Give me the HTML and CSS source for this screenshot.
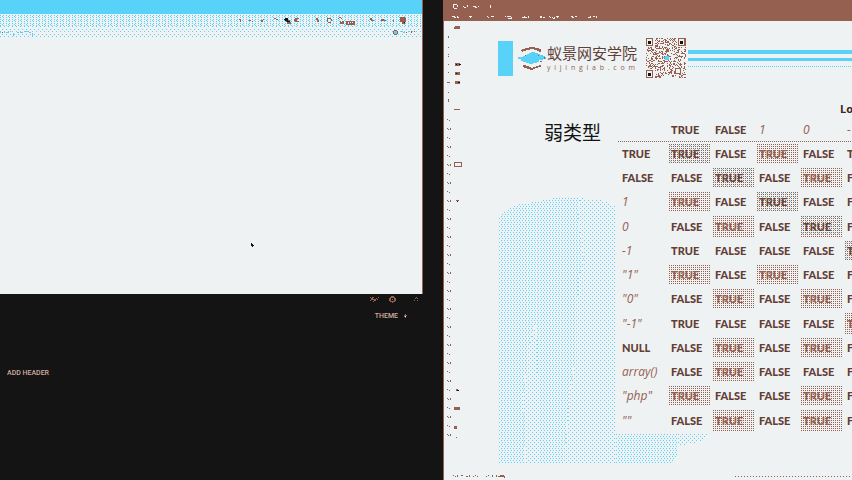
FILE: index.html
```html
<!DOCTYPE html>
<html lang="zh-CN">
<head>
<meta charset="utf-8">
<title>弱类型</title>
<link rel="stylesheet" href="styles.css">
</head>
<body>
<div class="desktop">
  <section class="tool">
    <div class="browser">
      <div class="tabs"></div>
      <div class="toolbar">
        <svg class="addons" width="184" height="12" viewBox="239 14 184 12" aria-hidden="true">
          <path class="brown" d="M240 19h2v1h-2zM241 20h1v2h-1zM250 20h2v1h-2zM253 21h1v1h-1zM262 20h2v2h-2zM264 19h1v1h-1zM275 18h2v1h-2zM277 19h2v1h-2zM288 20h3v2h1v2h-4v-2h-1zM296 18h4v1h-2v2h2v1h-4v-1h-1v-2h1zM317 18h2v2h1v2h-2v-2h-1zM328 18h4v1h-4zM328 19h1v3h-1zM332 19h1v2h-1zM329 22h3v1h-3zM339 18h1v-1h2v1h1v1h-1v-1h-2v1h-1zM341 21h1v1h1v-1h2v3h-4zM347 21h9v4h-9zM371 18h2v2h2v1h-3v-1h-1zM382 19h3v2h-3zM385 20h2v1h-2zM394 20h1v2h-1zM401 17h5v1h1v4h-1v2h-3v-2h-2z"/>
          <path class="ink" d="M285 19h1v-1h3v3h2v1h-3v-1h-2v-1h-1zM405 22h1v1h-1z"/>
          <path class="pale" d="M349 22h1v2h-1zM351 22h1v1h-1zM353 22h1v1h-1z"/>
        </svg>
      </div>
      <div class="bookmarks">
        <svg width="34" height="12" viewBox="0 25 34 12" aria-hidden="true"><path class="blue" d="M0 31h1v1h-1zM4 30h1v2h-1zM6 31h3v1h-3zM10 30h1v1h-1zM13 32h1v3h-1zM17 31h2v1h-2zM20 31h3v1h-3zM25 30h3v1h-3zM29 31h2v1h-2zM32 32h1v3h-1z"/><path class="brown" d="M2 31h1v1h-1z"/></svg>
        <svg width="32" height="12" viewBox="391 25 32 12" aria-hidden="true"><path class="brown" d="M395 29h3v1h-3zM394 30h1v3h-1zM398 30h1v3h-1zM395 33h3v1h-3zM407 31h1v1h-1zM412 30h1v2h-1zM415 30h1v1h-1z"/><path class="blue" d="M395 30h3v3h-3zM402 30h2v1h-2zM404 31h2v1h-2zM409 30h2v1h-2z"/></svg>
      </div>
      <svg class="cursor" width="4" height="5" viewBox="0 0 4 5" aria-hidden="true"><path class="ink" d="M0 0h1v1h1v1h1v1h-1v1h-1v-1h-1z"/></svg>
    </div>
    <div class="panel">
      <div class="panel-icons">
        <svg width="10" height="7" viewBox="0 0 10 7" aria-hidden="true"><path class="brown" d="M0 1h1v1H0zM2 1h2v1H2zM1 2h2v2H1zM0 4h1v1H0zM3 3h3v1H3zM4 4h2v1H4zM6 2h1v1H6zM8 1h1v1H8zM7 3h1v1H7zM3 5h1v1H3z"/></svg>
        <svg width="7" height="7" viewBox="0 0 7 7" aria-hidden="true"><path class="brown" fill-rule="evenodd" d="M2 0h3v1h1v1h1v3H6v1H4v1H3V6H1V5H0V2h1V1h1zM2 2v3h3V2z"/><path class="brown" d="M3 3h1v1H3z"/></svg>
        <svg width="5" height="7" viewBox="0 0 5 7" aria-hidden="true"><path class="brown" d="M2 1h1v1H2zM1 2h1v1H1zM3 2h1v1H3zM0 4h1v1H0zM3 4h1v1H3z"/></svg>
      </div>
      <div class="theme-row">
        <button type="button" class="flat">THEME</button>
        <svg width="4" height="5" viewBox="0 0 4 5" aria-hidden="true"><path class="brown" d="M2 0h1v1H2zM1 1h3v1H1zM1 2h1v1H1zM2 3h1v1H2z"/><path class="pale" d="M2 2h1v1H2z"/></svg>
      </div>
      <button type="button" class="flat add">ADD HEADER</button>
    </div>
  </section>

  <section class="viewer">
    <div class="titlebar">
      <svg width="190" height="21" viewBox="444 0 190 21" aria-hidden="true">
        <path class="pale" d="M453 4h4v1h-4zM453 5h1v3h-1zM457 5h1v2h-1zM454 8h3v1h-3zM463 6h1v1h-1zM464 7h2v1h-2zM467 5h1v2h-1zM473 6h3v1h-3zM475 7h2v1h-2zM478 6h1v1h-1zM490 5h1v3h-1zM452 16h3v1h-3zM454 17h2v1h-2zM457 16h1v2h-1zM458 17h1v1h-1zM469 16h3v1h-3zM470 17h1v1h-1zM487 16h1v1h-1zM488 17h1v1h-1zM491 16h3v1h-3zM505 16h1v1h-1zM507 16h4v1h-4zM508 18h3v-1h1v2h-4zM522 17h2v-1h1v1h2v1h-5zM528 16h1v2h-1zM540 16h2v2h-2zM543 17h2v1h-2zM549 16h1v1h1v1h-1zM552 17h1v1h1v-1h1v2h-2zM556 16h3v1h-1v1h-1zM571 16h2v1h1v1h-2zM574 16h3v1h-2zM588 17h2v-1h1v2h-3zM592 16h3v1h-2zM596 16h1v2h-1z"/>
      </svg>
    </div>
    <div class="workspace">
      <svg class="ruler" width="20" height="426" viewBox="444 21 20 426" aria-hidden="true">
        <defs>
          <pattern id="ticks" width="5" height="18" x="447" y="119" patternUnits="userSpaceOnUse">
            <path class="brown" d="M0 0h1v1H0zM2 1h1v1H2zM0 9h1v1H0zM3 9h1v2H3zM1 10h1v1H1z"/>
          </pattern>
        </defs>
        <path fill="url(#ticks)" d="M447 119h5v322h-5z"/>
        <path class="brown" d="M448 36h1v2h-1zM448 47h1v1h-1zM448 54h1v1h-1zM448 56h1v1h-1zM448 64h1v1h-1zM448 72h1v1h-1zM447 82h3v1h-3zM448 92h1v1h-1zM448 99h1v3h-1zM454 27h6v2h-6zM455 26h5v1h-5zM455 63h5v3h-5zM455 72h5v3h-5zM455 81h5v3h-5zM454 109h6v1h-6zM456 200h3v1h-3zM456 389h2v2h-2zM454 407h6v3h-6zM454 426h3v3h-3zM456 437h1v1h-1z"/>
        <path class="ink" d="M456 64h1v1h-1zM459 64h2v1h-2zM456 73h1v1h-1zM458 82h2v1h-2zM457 201h1v1h-1zM457 390h2v1h-2z"/>
        <path fill="none" stroke="#966051" d="M454.500 162.500h7v4h-7z"/>
      </svg>
      <main class="slide">
        <svg class="map" width="212" height="270" viewBox="498 196 212 270" aria-hidden="true">
          <defs>
            <pattern id="dense" width="3" height="4" patternUnits="userSpaceOnUse"><path class="blue" d="M0 0h1v1H0zM1 2h1v1H1z"/></pattern>
            <pattern id="light" width="4" height="4" patternUnits="userSpaceOnUse"><path class="blue" d="M0 0h1v1H0zM2 2h1v1H2z"/></pattern>
          </defs>
          <path fill="url(#dense)" d="M499 217l6-6 10-6 24-4 19-4h22l-2 21 6 42-6 20-2 70-6 40-6 74h-24l-4-142-7 24-6 50 2 68h-26z"/>
          <path fill="url(#light)" d="M580 198l22 2 14 6v258h-52l6-74 6-40 2-70 6-20-6-42zM536 322l4 142h-15l-2-68 6-50 7-24z"/>
          <path fill="url(#dense)" d="M616 434h62v20l-6 10h-56z"/>
          <path fill="url(#light)" d="M678 434h30l-8 8-22 4z"/>
        </svg>
        <header class="brand">
          <span class="block"></span>
          <svg width="28" height="28" viewBox="518 44 28 28" aria-hidden="true">
            <path class="brown" d="M523 49h2v-1h4v-1h6v1h4v1h2v3h-2v-1h-2v-1h-3v-1h-4v1h-4v1h-3v1h-1v-1h-2zM523 65h3v1h3v1h2v1h2v-1h3v-1h3v-1h2v2h-3v1h-3v1h-2v1h-3v-1h-3v-1h-3v-1h-1z"/>
            <path class="blue" d="M518 57h5v-1h2v-1h2v-1h2v-1h2v-1h4v1h3v1h2v1h3v1h2v1h1v2h-3v1h-4v2h-2v1h-4v1h-4v-1h-3v-1h-3v-1h-2v-2h-3z"/>
            <path class="brown" d="M525 55h1v1h-1zM538 55h1v1h-1zM544 57h1v2h-1zM540 61h2v1h-2z"/>
          </svg>
          <div class="name">
            <strong>蚁景网安学院</strong>
            <div class="domain"><span>y</span><span>i</span><span>j</span><span>i</span><span>n</span><span>g</span><span>l</span><span>a</span><span>b</span><span>.</span><span>c</span><span>o</span><span>m</span></div>
          </div>
          <svg class="qr" width="40" height="40" viewBox="0 0 40 40" aria-label="二维码" role="img">
            <path id="modules" class="brown"/>
            <path class="brown" fill-rule="evenodd" d="M0 0h7v8H0zM1 1v6h5V1zM32 0h8v8h-8zM33 1v6h5V1zM0 32h7v8H0zM1 33v6h5v-6zM29 30h6v6h-6zM30 31v4h4v-4z"/>
            <path class="ink" d="M2 3h3v3H2zM34 3h3v3h-3zM2 35h3v3H2z"/>
            <path class="blue" d="M17 19h2v-1h4v4h-4v-2h-2z"/>
          </svg>
          <div class="stripes"><i class="thick"></i><i class="mid"></i><i class="dots"></i></div>
        </header>
        <div class="content">
          <h1>弱类型</h1>
          <table>
            <caption><span>Loose comparisons with ==</span></caption>
            <colgroup><col class="key"><col><col><col><col><col></colgroup>
            <thead>
              <tr><td></td><th scope="col">TRUE</th><th scope="col">FALSE</th><th scope="col"><em>1</em></th><th scope="col"><em>0</em></th><th scope="col"><em>-1</em></th></tr>
            </thead>
            <tbody>
              <tr><th scope="row">TRUE</th><td class="eq same">TRUE</td><td>FALSE</td><td class="eq">TRUE</td><td>FALSE</td><td>TRUE</td></tr>
              <tr><th scope="row">FALSE</th><td>FALSE</td><td class="eq same">TRUE</td><td>FALSE</td><td class="eq">TRUE</td><td>FALSE</td></tr>
              <tr><th scope="row"><em>1</em></th><td class="eq">TRUE</td><td>FALSE</td><td class="eq same">TRUE</td><td>FALSE</td><td>FALSE</td></tr>
              <tr><th scope="row"><em>0</em></th><td>FALSE</td><td class="eq">TRUE</td><td>FALSE</td><td class="eq same">TRUE</td><td>FALSE</td></tr>
              <tr><th scope="row"><em>-1</em></th><td>TRUE</td><td>FALSE</td><td>FALSE</td><td>FALSE</td><td class="eq same">TRUE</td></tr>
              <tr><th scope="row"><em>"1"</em></th><td class="eq">TRUE</td><td>FALSE</td><td class="eq">TRUE</td><td>FALSE</td><td>FALSE</td></tr>
              <tr><th scope="row"><em>"0"</em></th><td>FALSE</td><td class="eq">TRUE</td><td>FALSE</td><td class="eq">TRUE</td><td>FALSE</td></tr>
              <tr><th scope="row"><em>"-1"</em></th><td>TRUE</td><td>FALSE</td><td>FALSE</td><td>FALSE</td><td class="eq">TRUE</td></tr>
              <tr><th scope="row">NULL</th><td>FALSE</td><td class="eq">TRUE</td><td>FALSE</td><td class="eq">TRUE</td><td>FALSE</td></tr>
              <tr><th scope="row"><em>array()</em></th><td>FALSE</td><td class="eq">TRUE</td><td>FALSE</td><td>FALSE</td><td>FALSE</td></tr>
              <tr><th scope="row"><em>"php"</em></th><td class="eq">TRUE</td><td>FALSE</td><td>FALSE</td><td class="eq">TRUE</td><td>FALSE</td></tr>
              <tr><th scope="row"><em>""</em></th><td>FALSE</td><td class="eq">TRUE</td><td>FALSE</td><td class="eq">TRUE</td><td>FALSE</td></tr>
            </tbody>
          </table>
        </div>
      </main>
    </div>
    <footer class="status">
      <svg width="54" height="5" viewBox="0 0 54 5" aria-hidden="true"><path class="brown" d="M0 1h1v1H0zM2 2h1v1H2zM4 1h1v2H4zM8 1h2v1H8zM13 2h2v1h-2zM16 1h1v2h-1zM20 2h1v1h-1zM22 1h1v1h-1zM24 2h1v1h-1zM33 2h1v1h-1zM35 1h1v1h-1zM39 1h1v2h-1zM43 1h1v2h-1zM45 2h2v1h-2zM47 1h4v2h-4zM51 2h1v2h-1z"/></svg>
      <span class="trail"></span>
    </footer>
  </section>
</div>
<script src="qr.js"></script>
</body>
</html>
```

FILE: styles.css
```css
:root {
  --blue: #59d2fa;
  --brown: #966051;
  --pale: #eef2f3;
  --ink: #141414;
}

* { box-sizing: border-box; }

body {
  margin: 0;
  background: var(--ink);
  font-family: "Open Sans", "Noto Sans CJK SC", sans-serif;
}

svg { display: block; flex: none; shape-rendering: crispEdges; }
.brown { fill: var(--brown); }
.blue { fill: var(--blue); }
.pale { fill: var(--pale); }
.ink { fill: var(--ink); }

.desktop {
  display: grid;
  grid-template-columns: 52fr 48fr;
  height: 100vh;
  overflow: hidden;
}

.tool {
  display: grid;
  grid-template-rows: 49fr 31fr;
  min-width: 0;
}

.browser {
  position: relative;
  margin-right: 20px;
  background: var(--pale);
  border-right: 1px solid var(--brown);
}

.tabs { height: 14px; background: var(--blue); }

.toolbar {
  display: flex;
  justify-content: flex-end;
  height: 12px;
  background:
    conic-gradient(at 1px 1px, transparent 75%, var(--blue) 0) 0 1px / 3px 2px,
    conic-gradient(at 1px 1px, transparent 75%, var(--blue) 0) 2px 2px / 6px 4px;
}

.bookmarks {
  display: flex;
  justify-content: space-between;
  height: 12px;
  background:
    conic-gradient(at 1px 1px, transparent 75%, var(--blue) 0) 0 0 / 4px 5px,
    conic-gradient(at 1px 1px, transparent 75%, var(--blue) 0) 2px 3px / 4px 5px;
}

.cursor { position: absolute; left: 251px; top: 243px; }

.panel { padding-top: 2px; }

.panel-icons {
  display: flex;
  justify-content: flex-end;
  gap: 14px;
  padding-right: 24px;
}

.panel-icons svg:first-child { margin-right: -5px; }
.panel-icons svg:last-child { margin-left: 4px; }

.theme-row {
  display: flex;
  justify-content: flex-end;
  align-items: center;
  gap: 5px;
  margin-top: 8px;
  padding-right: 36px;
}

.flat {
  display: block;
  padding: 0;
  border: 0;
  background: none;
  color: #d3aca1;
  font: 500 7px/10px Roboto, sans-serif;
}

.add { margin: 47px 0 0 7px; }

.viewer {
  display: flex;
  flex-direction: column;
  min-width: 0;
  background: var(--pale);
  border-left: 1px solid var(--brown);
}

.titlebar { height: 21px; background: var(--brown); }

.workspace { display: flex; flex: 1; min-height: 0; }

.slide {
  position: relative;
  flex: 1;
  min-width: 0;
  padding: 17px 0 0 34px;
  overflow: hidden;
}

.map { position: absolute; left: 34px; top: 175px; }

.brand { display: flex; align-items: center; height: 40px; }

.block { width: 15px; height: 35px; margin-right: 5px; background: var(--blue); }

.name { width: 88px; margin: 0 11px 0 1px; color: var(--brown); }

.name strong {
  display: block;
  color: #5f4038;
  font: 400 15px/20px "Noto Sans CJK SC", sans-serif;
  white-space: nowrap;
}

.domain {
  display: flex;
  justify-content: space-between;
  font-size: 7px;
  line-height: 10px;
}

.stripes { flex: 1; align-self: flex-start; padding: 12px 0 0 2px; }
.stripes i { display: block; }

.thick { height: 4px; background: var(--blue); }

.mid { height: 3px; margin-top: 4px; background: var(--blue); }

.dots {
  height: 1px;
  margin-top: 5px;
  background: repeating-linear-gradient(90deg, var(--blue) 0 1px, transparent 1px 2px);
}

.content {
  position: relative;
  display: grid;
  grid-template-columns: 120px 1fr;
  align-items: start;
  margin-top: 22px;
}

h1 {
  margin: 18px 0 0 46px;
  color: var(--ink);
  font: 400 19px/28px "Noto Sans CJK SC", sans-serif;
  white-space: nowrap;
}

table {
  width: 269px;
  border-collapse: separate;
  border-spacing: 0;
  table-layout: fixed;
  color: #633e34;
  font: 11px/16px Lato, "Open Sans", sans-serif;
}

.key { width: 49px; }

caption {
  padding-left: 222px;
  color: #40251f;
  font: 700 11px/18px "Open Sans", sans-serif;
  text-align: left;
  white-space: nowrap;
}

/* The title starts over the last columns and runs on past the table. */
caption span { display: block; width: 0; }

tr { height: 24px; }
tbody tr:nth-child(4n) { height: 25px; }

th, td {
  padding: 0 0 0 2px;
  border: solid transparent;
  border-width: 2px 1px 2px 2px;
  background-clip: padding-box;
  font-weight: 900;
  text-align: left;
  white-space: nowrap;
}

em {
  color: var(--brown);
  font: italic 400 12px/16px "Open Sans", sans-serif;
}

thead tr {
  background: repeating-linear-gradient(90deg, var(--brown) 0 1px, transparent 1px 2px) bottom / 100% 1px no-repeat;
}

.eq {
  color: var(--brown);
  background-image: conic-gradient(at 1px 1px, transparent 75%, #966051 0);
  background-size: 2px 2px;
}

.same {
  color: #6d4338;
  background-image:
    conic-gradient(at 1px 1px, transparent 75%, #966051 0),
    conic-gradient(at 1px 1px, transparent 75%, #59d2fa 0);
  background-position: 0 0, 1px 1px;
  background-size: 2px 2px, 4px 4px;
}

.status {
  display: flex;
  align-items: center;
  gap: 228px;
  height: 8px;
  padding-left: 9px;
}

.trail {
  flex: 1;
  height: 1px;
  background: repeating-linear-gradient(90deg, var(--brown) 0 1px, transparent 1px 3px);
}
```

FILE: qr.js
```js
// Fills the data area of the code with modules, leaving the corner finders clear.
const size = 40;
let seed = 7;
let path = "";
for (let y = 0; y < size; y++) {
  for (let x = 0; x < size; x++) {
    seed = (seed * 1103515245 + 12345) % 2147483648;
    const finder = (x < 9 && (y < 9 || y > 30)) || (x > 30 && y < 9) || (x > 28 && x < 35 && y > 29 && y < 36);
    if (!finder && seed / 2147483648 < 0.33) path += `M${x} ${y}h1v1h-1z`;
  }
}
document.getElementById("modules").setAttribute("d", path);
```
